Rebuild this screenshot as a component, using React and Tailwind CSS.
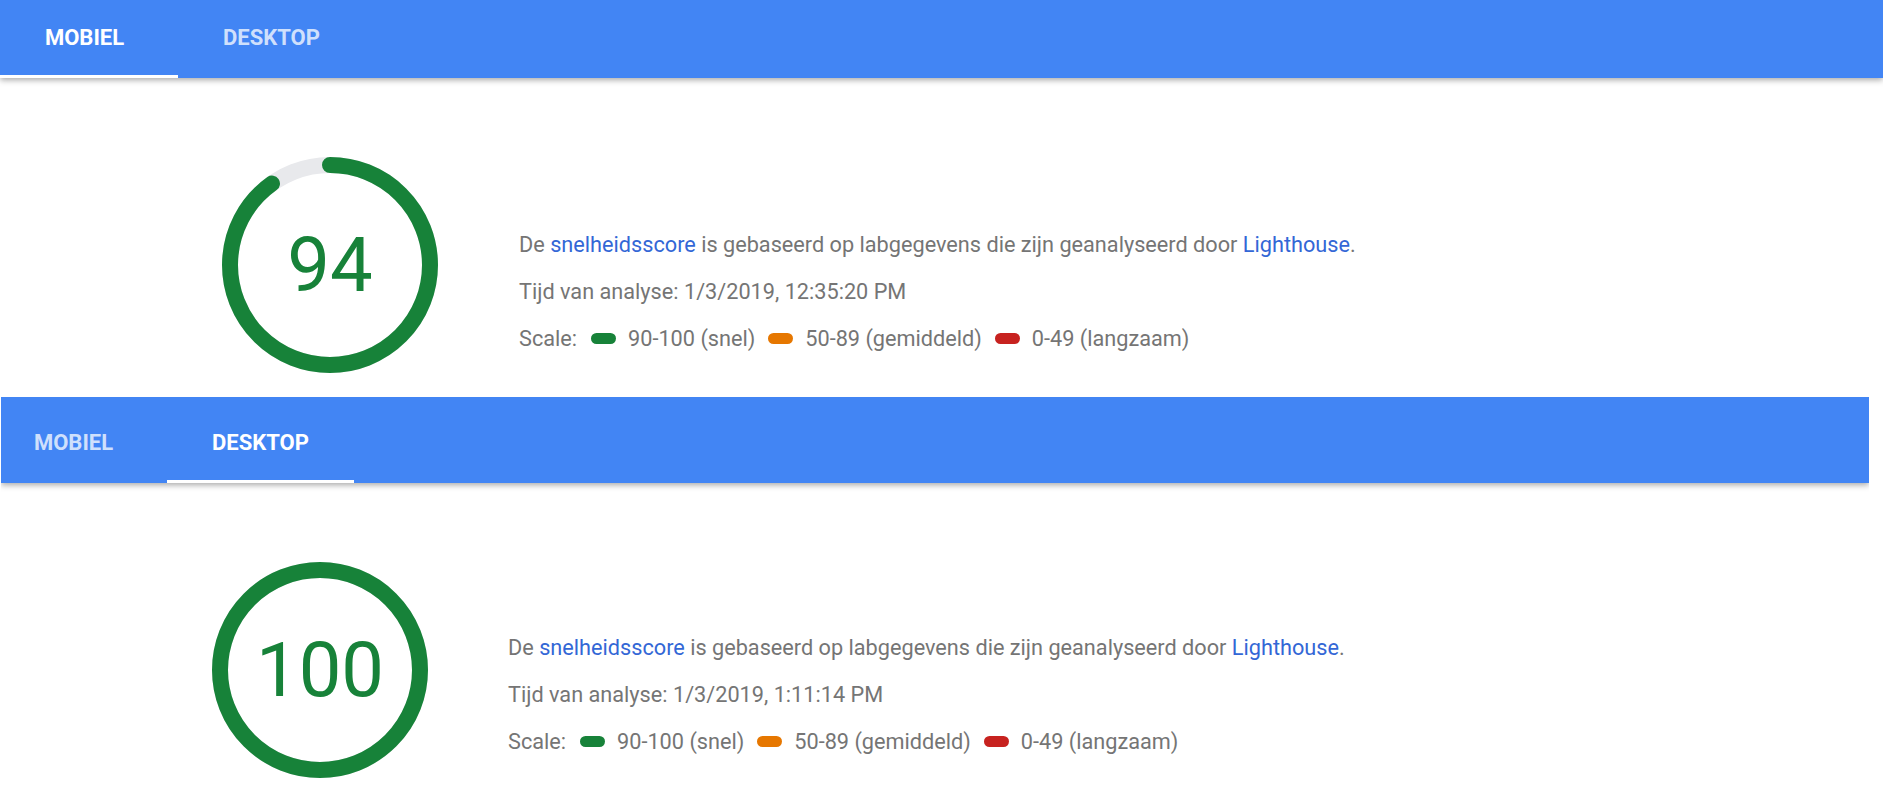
import React from 'react'

const tabs = ['Mobiel', 'Desktop']

function TabBar({ active, first }) {
  return (
    <div className="relative z-10 flex h-[86px] bg-[#4285f4] shadow-[0_2px_6px_rgba(0,0,0,0.35)]">
      <div className={first === 'a' ? 'flex ml-[-9px]' : 'flex ml-[-21px]'}>
        {tabs.map((t) => (
          <div
            key={t}
            className={
              'flex w-[187px] items-center justify-center pt-[7px] border-b-[3px] text-[22px] font-bold uppercase ' +
              (t === active ? 'border-white text-white' : 'border-transparent text-white/75')
            }
          >
            {t}
          </div>
        ))}
      </div>
    </div>
  )
}

function Gauge({ score }) {
  const r = 100
  const c = 2 * Math.PI * r
  const len = score === 100 ? c : c * 0.9
  return (
    <div className="relative h-[216px] w-[216px] shrink-0">
      <svg width="216" height="216" viewBox="0 0 216 216">
        <circle cx="108" cy="108" r={r} fill="none" stroke="#e8e9ec" strokeWidth="16" />
        <circle
          cx="108"
          cy="108"
          r={r}
          fill="none"
          stroke="#178239"
          strokeWidth="16"
          strokeLinecap="round"
          strokeDasharray={`${len} ${c}`}
          transform="rotate(-90 108 108)"
        />
      </svg>
      <div className="absolute inset-0 flex items-center justify-center text-[76px] leading-none text-[#178239]">
        {score}
      </div>
    </div>
  )
}

function Pill({ color }) {
  return <span className={'inline-block h-[11px] w-[25px] rounded-full align-[1px] ' + color} />
}

function Summary({ time }) {
  return (
    <div className="text-[21.7px] leading-[47px] text-[#757575]">
      <p>
        De <span className="text-[#3367d6]">snelheidsscore</span> is gebaseerd op labgegevens die zijn geanalyseerd door{' '}
        <span className="text-[#3367d6]">Lighthouse</span>.
      </p>
      <p>Tijd van analyse: {time}</p>
      <p className="flex items-center">
        <span>Scale:</span>
        <Pill color="ml-[14px] bg-[#178239]" />
        <span className="ml-[12px]">90-100 (snel)</span>
        <Pill color="ml-[13px] bg-[#e67700]" />
        <span className="ml-[12px]">50-89 (gemiddeld)</span>
        <Pill color="ml-[13px] bg-[#c7221f]" />
        <span className="ml-[12px]">0-49 (langzaam)</span>
      </p>
    </div>
  )
}

export default function App() {
  return (
    <div className="min-h-screen bg-white font-['Roboto',sans-serif]">
      {/* mobile report (top cropped) */}
      <section className="h-[397px] overflow-hidden">
        <div className="mt-[-8px]">
          <TabBar active="Mobiel" first="a" />
        </div>
        <div className="flex items-start pl-[222px] pt-[79px]">
          <Gauge score={94} />
          <div className="ml-[81px] mt-[64px]">
            <Summary time="1/3/2019, 12:35:20 PM" />
          </div>
        </div>
      </section>

      {/* desktop report */}
      <section className="ml-[1px] w-[1868px] overflow-hidden">
        <TabBar active="Desktop" first="b" />
        <div className="flex items-start pl-[211px] pt-[79px] pb-[20px]">
          <Gauge score={100} />
          <div className="ml-[80px] mt-[62px]">
            <Summary time="1/3/2019, 1:11:14 PM" />
          </div>
        </div>
      </section>
    </div>
  )
}
